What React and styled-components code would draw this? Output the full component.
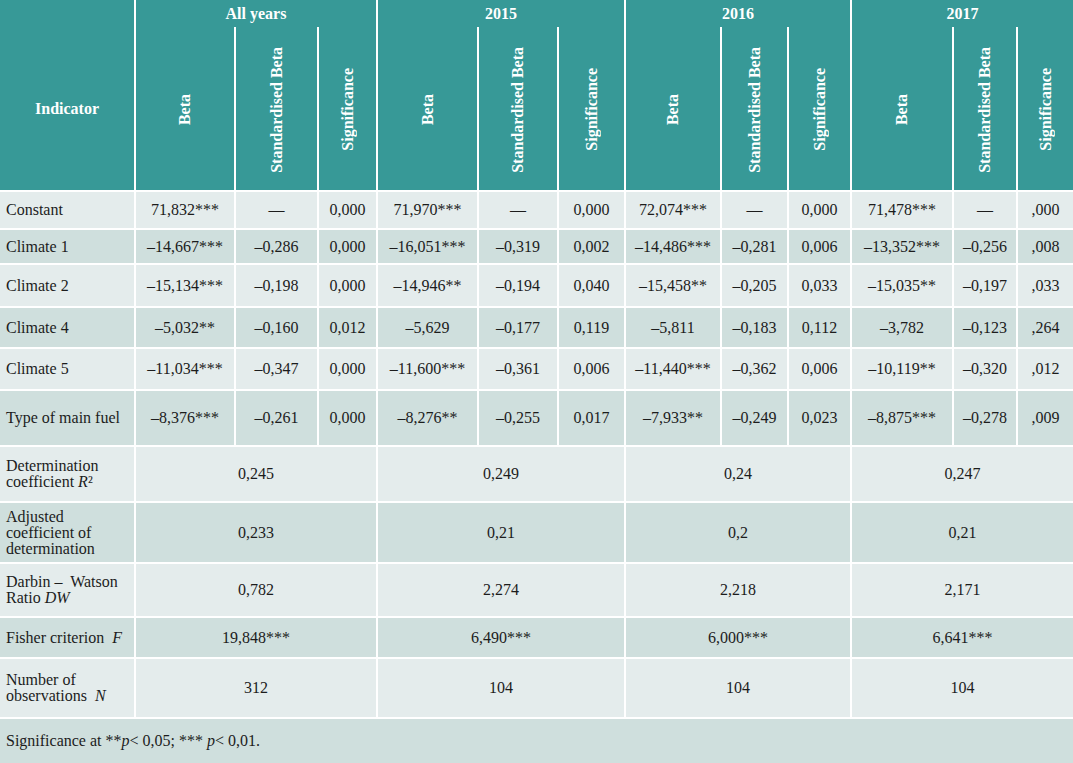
import React from 'react';
import styled, { createGlobalStyle } from 'styled-components';

const GlobalStyle = createGlobalStyle`
  html, body {
    margin: 0;
    padding: 0;
    background: #ffffff;
  }
  body {
    font-family: 'Liberation Serif', 'Times New Roman', serif;
  }
`;

const TEAL = '#379997';
const LIGHT = '#e4ecec';
const DARK = '#cfdfdd';

const widths = [135, 100, 83, 59, 101, 80, 67, 96, 67, 63, 102, 64, 56];
const groups = ['All years', '2015', '2016', '2017'];
const subHeads = ['Beta', 'Standardised Beta', 'Significance'];

const coefRows = [
  { label: 'Constant', h: 38, cells: ['71,832***', '—', '0,000', '71,970***', '—', '0,000', '72,074***', '—', '0,000', '71,478***', '—', ',000'] },
  { label: 'Climate 1', h: 35, cells: ['–14,667***', '–0,286', '0,000', '–16,051***', '–0,319', '0,002', '–14,486***', '–0,281', '0,006', '–13,352***', '–0,256', ',008'] },
  { label: 'Climate 2', h: 43, cells: ['–15,134***', '–0,198', '0,000', '–14,946**', '–0,194', '0,040', '–15,458**', '–0,205', '0,033', '–15,035**', '–0,197', ',033'] },
  { label: 'Climate 4', h: 41, cells: ['–5,032**', '–0,160', '0,012', '–5,629', '–0,177', '0,119', '–5,811', '–0,183', '0,112', '–3,782', '–0,123', ',264'] },
  { label: 'Climate 5', h: 42, cells: ['–11,034***', '–0,347', '0,000', '–11,600***', '–0,361', '0,006', '–11,440***', '–0,362', '0,006', '–10,119**', '–0,320', ',012'] },
  { label: 'Type of main fuel', h: 56, cells: ['–8,376***', '–0,261', '0,000', '–8,276**', '–0,255', '0,017', '–7,933**', '–0,249', '0,023', '–8,875***', '–0,278', ',009'] },
];

const summaryRows = [
  { h: 56, label: <>Determination<br />coefficient <i>R</i>²</>, values: ['0,245', '0,249', '0,24', '0,247'] },
  { h: 61, label: <>Adjusted<br />coefficient of<br />determination</>, values: ['0,233', '0,21', '0,2', '0,21'] },
  { h: 54, label: <>Darbin –&nbsp; Watson<br />Ratio <i>DW</i></>, values: ['0,782', '2,274', '2,218', '2,171'] },
  { h: 41, label: <>Fisher criterion&nbsp; <i>F</i></>, values: ['19,848***', '6,490***', '6,000***', '6,641***'] },
  { h: 60, label: <>Number of<br />observations&nbsp; <i>N</i></>, values: ['312', '104', '104', '104'] },
];

const Table = styled.table`
  width: 1073px;
  table-layout: fixed;
  border-collapse: collapse;
  font-family: 'Liberation Serif', 'Times New Roman', serif;
  font-size: 16px;
  color: #1c1c1c;

  td, th {
    border: 2px solid #ffffff;
    padding: 0;
    font-family: inherit;
  }
  tr > *:first-child {
    border-left: 0;
  }
  tr > *:last-child {
    border-right: 0;
  }
  tr:last-child > * {
    border-bottom: 0;
  }
`;

const HeadRow = styled.tr`
  height: ${(p) => p.$h}px;
  background: ${TEAL};
`;

const HeadCell = styled.th`
  color: #ffffff;
  font-weight: bold;
  text-align: center;
  vertical-align: middle;
  border-top: 0 !important;
`;

const IndicatorHead = styled(HeadCell)`
  padding-top: 27px !important;
`;

const GroupHead = styled(HeadCell)`
  border-bottom: 0 !important;
  vertical-align: top;
  padding-top: 5px !important;
  line-height: 18px;
`;

const SubHead = styled(HeadCell)`
  border-top: 0 !important;
  padding-top: 6px !important;
`;

const Rotated = styled.span`
  display: inline-block;
  writing-mode: vertical-rl;
  transform: rotate(180deg);
  white-space: nowrap;
  line-height: 18px;
`;

const Row = styled.tr`
  height: ${(p) => p.$h}px;
  background: ${(p) => (p.$dark ? DARK : LIGHT)};
`;

const Label = styled.td`
  text-align: left;
  vertical-align: middle;
  padding: 0 4px 0 6px !important;
  line-height: 16px;
`;

const Value = styled.td`
  text-align: center;
  vertical-align: middle;
  white-space: nowrap;
`;

const Note = styled.td`
  text-align: left;
  vertical-align: middle;
  padding-left: 6px !important;
`;

export default function App() {
  return (
    <>
      <GlobalStyle />
      <Table>
        <colgroup>
          {widths.map((w, i) => (
            <col key={i} style={{ width: w }} />
          ))}
        </colgroup>
        <thead>
          <HeadRow $h={27}>
            <IndicatorHead rowSpan={2}>Indicator</IndicatorHead>
            {groups.map((g) => (
              <GroupHead key={g} colSpan={3}>{g}</GroupHead>
            ))}
          </HeadRow>
          <HeadRow $h={164}>
            {groups.map((g) =>
              subHeads.map((s) => (
                <SubHead key={g + s}>
                  <Rotated>{s}</Rotated>
                </SubHead>
              ))
            )}
          </HeadRow>
        </thead>
        <tbody>
          {coefRows.map((r, i) => (
            <Row key={r.label} $h={r.h} $dark={i % 2 === 1}>
              <Label>{r.label}</Label>
              {r.cells.map((c, j) => (
                <Value key={j}>{c}</Value>
              ))}
            </Row>
          ))}
          {summaryRows.map((r, i) => (
            <Row key={i} $h={r.h} $dark={i % 2 === 1}>
              <Label>{r.label}</Label>
              {r.values.map((v, j) => (
                <Value key={j} colSpan={3}>{v}</Value>
              ))}
            </Row>
          ))}
          <Row $h={45} $dark>
            <Note colSpan={13}>
              Significance at **<i>p</i>&lt; 0,05; *** <i>p</i>&lt; 0,01.
            </Note>
          </Row>
        </tbody>
      </Table>
    </>
  );
}
